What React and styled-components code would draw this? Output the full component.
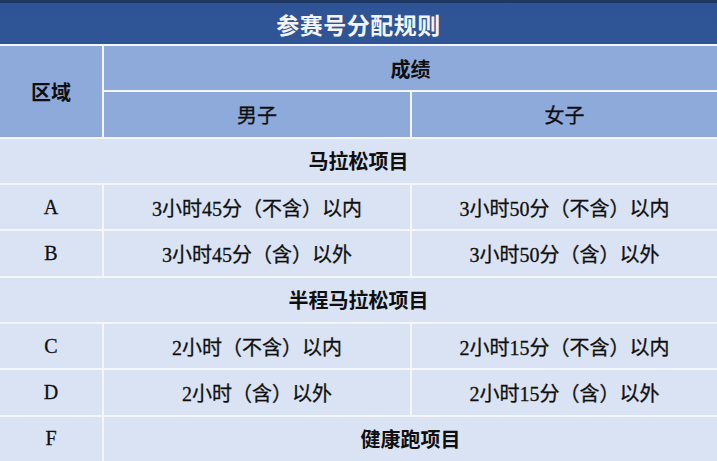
import React from 'react'
import styled, { createGlobalStyle } from 'styled-components'

const GlobalStyle = createGlobalStyle`
  html, body {
    margin: 0;
    padding: 0;
    background: #ffffff;
  }
`

const tones = {
  title: '#2f5496',
  head: '#8eaadb',
  body: '#dae3f3',
}

const Table = styled.div`
  display: grid;
  grid-template-columns: 102px 306px 1fr;
  grid-template-rows: 44px repeat(9, 1fr);
  gap: 2px;
  width: 717px;
  height: 461px;
  background: #f4f6fb;
  font-family: 'Liberation Serif', 'Noto Sans CJK SC', serif;
  color: #0f0f0f;
`

const Cell = styled.div`
  display: flex;
  align-items: center;
  justify-content: center;
  background: ${p => tones[p.$tone || 'body']};
  grid-column: ${p => (p.$span ? `span ${p.$span}` : 'auto')};
  grid-row: ${p => (p.$rows ? `span ${p.$rows}` : 'auto')};
  font-size: 20px;
  font-weight: ${p => (p.$bold ? 700 : 400)};
  -webkit-text-stroke: ${p => (p.$bold ? '0' : '0.3px')} currentColor;
  white-space: pre;
`

const Title = styled(Cell)`
  grid-column: 1 / -1;
  background: linear-gradient(#1f3763 0, #1f3763 3px, #2f5496 3px, #2f5597 100%);
  padding-top: 3px;
  color: #f4f4f4;
  font-size: 23px;
  font-weight: 700;
  letter-spacing: 0.5px;
  -webkit-text-stroke: 0;
`

const sections = [
  {
    name: '马拉松项目',
    rows: [
      ['A', '3小时45分（不含）以内', '3小时50分（不含）以内'],
      ['B', '3小时45分（含）以外', '3小时50分（含）以外'],
    ],
  },
  {
    name: '半程马拉松项目',
    rows: [
      ['C', '2小时（不含）以内', '2小时15分（不含）以内'],
      ['D', '2小时（含）以外', '2小时15分（含）以外'],
    ],
  },
]

export default function App() {
  return (
    <>
      <GlobalStyle />
      <Table>
        <Title>参赛号分配规则</Title>

        <Cell $tone="head" $rows={2} $bold>区域</Cell>
        <Cell $tone="head" $span={2} $bold>成绩</Cell>
        <Cell $tone="head">男子</Cell>
        <Cell $tone="head">女子</Cell>

        {sections.map(section => (
          <React.Fragment key={section.name}>
            <Cell $span={3} $bold>{section.name}</Cell>
            {section.rows.map(([zone, men, women]) => (
              <React.Fragment key={zone}>
                <Cell>{zone}</Cell>
                <Cell>{men}</Cell>
                <Cell>{women}</Cell>
              </React.Fragment>
            ))}
          </React.Fragment>
        ))}

        <Cell>F</Cell>
        <Cell $span={2} $bold>健康跑项目</Cell>
      </Table>
    </>
  )
}
